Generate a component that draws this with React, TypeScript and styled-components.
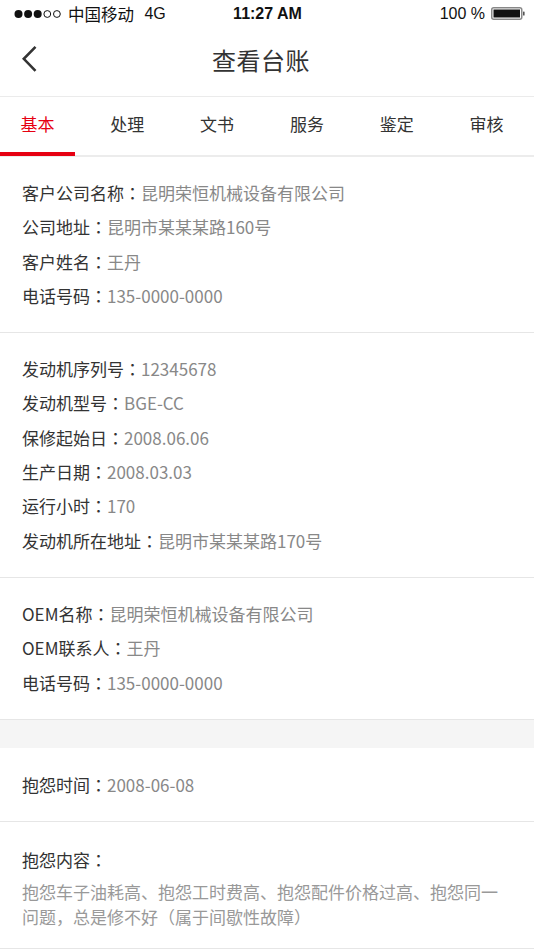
import React from "react";
import styled, { createGlobalStyle } from "styled-components";

const GlobalStyle = createGlobalStyle`
  html, body { margin: 0; padding: 0; background: #ffffff; }
  body {
    font-family: "Noto Sans CJK SC", "Noto Sans", sans-serif;
    -webkit-font-smoothing: antialiased;
  }
  * { box-sizing: border-box; }
`;

const Page = styled.div`
  width: 534px;
  min-height: 950px;
  background: #ffffff;
  display: flex;
  flex-direction: column;
`;

const StatusBar = styled.div`
  height: 26px;
  padding: 1px 9px 0 14px;
  display: grid;
  grid-template-columns: 1fr auto 1fr;
  align-items: center;
  font-family: "Liberation Sans", "Noto Sans CJK SC", sans-serif;
  font-size: 16px;
  color: #111;
`;

const StatusLeft = styled.div`
  display: flex;
  align-items: center;
  gap: 6px;
  white-space: nowrap;
`;

const Carrier = styled.span`
  font-family: "Noto Sans CJK SC", sans-serif;
  font-size: 16.5px;
`;

const Time = styled.div`
  font-weight: bold;
  font-size: 16px;
  padding-right: 4px;
`;

const StatusRight = styled.div`
  display: flex;
  align-items: center;
  justify-content: flex-end;
  gap: 6px;
`;

const NavBar = styled.div`
  height: 71px;
  padding: 0 12px 3px 0;
  display: flex;
  align-items: center;
  justify-content: center;
  position: relative;
  border-bottom: 1px solid #ebebeb;
`;

const BackButton = styled.button`
  position: absolute;
  left: 16px;
  top: 50%;
  transform: translateY(-55%);
  width: 28px;
  height: 34px;
  padding: 0;
  border: none;
  background: transparent;
  display: flex;
  align-items: center;
  justify-content: center;
`;

const Title = styled.h1`
  margin: 0;
  font-size: 24px;
  font-weight: 400;
  color: #333;
  letter-spacing: 0.5px;
`;

const TabBar = styled.div`
  height: 60px;
  display: flex;
  gap: 14.8px;
  border-bottom: 2px solid #ececec;
`;

const Tab = styled.div<{ $active?: boolean }>`
  width: 75px;
  flex: none;
  display: flex;
  align-items: center;
  justify-content: center;
  padding: 0 0 3px 0;
  font-size: 17px;
  color: ${(p) => (p.$active ? "#e60012" : "#333")};
  border-bottom: 4px solid ${(p) => (p.$active ? "#e60012" : "transparent")};
  margin-bottom: -1px;
`;

const Section = styled.div<{ $top?: number }>`
  padding: ${(p) => p.$top ?? 19}px 22px 19px;
  border-bottom: 1px solid #e6e6e6;
`;

const Row = styled.div`
  line-height: 34.3px;
  font-size: 17px;
  color: #333;
  white-space: nowrap;
`;

const Value = styled.span`
  color: #888;
`;

/* centred full-width colon, as in the reference */
const Punct = styled.span`
  font-family: "Noto Sans CJK TC", "Noto Sans CJK SC", sans-serif;
`;

const Gap = styled.div`
  height: 28px;
  background: #f5f5f5;
`;

const Paragraph = styled.p`
  margin: 2px 0 0;
  font-size: 17px;
  line-height: 25px;
  color: #999;
`;

const SignalDots = () => (
  <svg width="48" height="10" viewBox="0 0 48 10">
    {[0, 1, 2, 3, 4].map((i) =>
      i < 3 ? (
        <circle key={i} cx={4.5 + i * 9.6} cy={5} r={4} fill="#111" />
      ) : (
        <circle key={i} cx={4.5 + i * 9.6} cy={5} r={3.4} fill="none" stroke="#111" strokeWidth={1} />
      )
    )}
  </svg>
);

const Battery = () => (
  <svg width="34" height="13" viewBox="0 0 34 13">
    <rect x="0.75" y="0.75" width="30" height="11.5" rx="2" fill="none" stroke="#888" strokeWidth="1.5" />
    <rect x="2.5" y="2.5" width="26.5" height="8" fill="#111" />
    <rect x="32" y="4.5" width="1.6" height="4" rx="0.6" fill="#555" />
  </svg>
);

const BackIcon = () => (
  <svg width="16" height="28" viewBox="0 0 16 28">
    <polyline points="13.5,1.5 1.8,13.5 13.5,25.5" fill="none" stroke="#333" strokeWidth="2.6" strokeLinejoin="miter" />
  </svg>
);

type Field = [string, string];

const sec1: Field[] = [
  ["客户公司名称", "昆明荣恒机械设备有限公司"],
  ["公司地址", "昆明市某某某路160号"],
  ["客户姓名", "王丹"],
  ["电话号码", "135-0000-0000"],
];

const sec2: Field[] = [
  ["发动机序列号", "12345678"],
  ["发动机型号", "BGE-CC"],
  ["保修起始日", "2008.06.06"],
  ["生产日期", "2008.03.03"],
  ["运行小时", "170"],
  ["发动机所在地址", "昆明市某某某路170号"],
];

const sec3: Field[] = [
  ["OEM名称", "昆明荣恒机械设备有限公司"],
  ["OEM联系人", "王丹"],
  ["电话号码", "135-0000-0000"],
];

const tabs = ["基本", "处理", "文书", "服务", "鉴定", "审核"];

const Fields = ({ items }: { items: Field[] }) => (
  <>
    {items.map(([k, v], i) => (
      <Row key={i}>
        {k}
        <Punct>：</Punct>
        <Value>{v}</Value>
      </Row>
    ))}
  </>
);

export default function App() {
  return (
    <Page>
      <GlobalStyle />
      <StatusBar>
        <StatusLeft>
          <SignalDots />
          <Carrier>中国移动</Carrier>
          <span>&nbsp;4G</span>
        </StatusLeft>
        <Time>11:27 AM</Time>
        <StatusRight>
          <span>100 %</span>
          <Battery />
        </StatusRight>
      </StatusBar>
      <NavBar>
        <BackButton aria-label="back">
          <BackIcon />
        </BackButton>
        <Title>查看台账</Title>
      </NavBar>
      <TabBar>
        {tabs.map((t, i) => (
          <Tab key={t} $active={i === 0}>
            {t}
          </Tab>
        ))}
      </TabBar>
      <Section>
        <Fields items={sec1} />
      </Section>
      <Section>
        <Fields items={sec2} />
      </Section>
      <Section>
        <Fields items={sec3} />
      </Section>
      <Gap />
      <Section $top={20}>
        <Fields items={[["抱怨时间", "2008-06-08"]]} />
      </Section>
      <Section $top={21}>
        <Row>
          抱怨内容<Punct>：</Punct>
        </Row>
        <Paragraph>
          抱怨车子油耗高、抱怨工时费高、抱怨配件价格过高、抱怨同一问题，总是修不好（属于间歇性故障）
        </Paragraph>
      </Section>
    </Page>
  );
}
